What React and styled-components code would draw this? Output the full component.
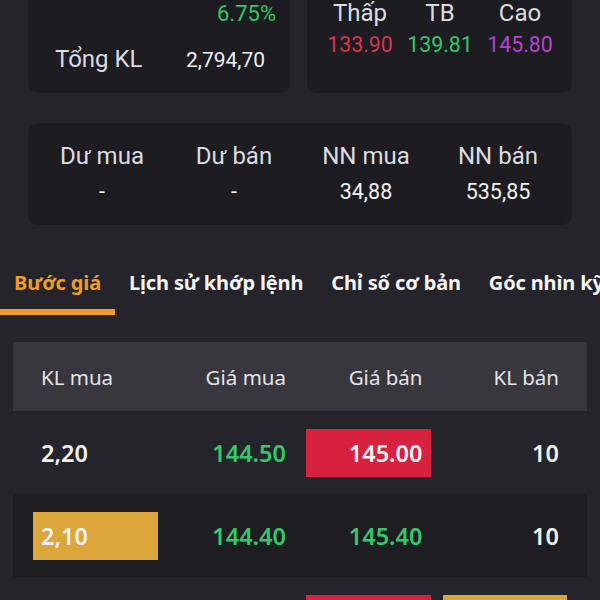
import React from 'react'
import styled, { createGlobalStyle } from 'styled-components'

const GlobalStyle = createGlobalStyle`
  html, body {
    margin: 0;
    padding: 0;
    background: #25242a;
  }
  body {
    width: 600px;
    height: 600px;
    overflow: hidden;
    font-family: Roboto, "Noto Sans", sans-serif;
    color: #e6e6e9;
  }
`

const Page = styled.div`
  width: 600px;
  display: flex;
  flex-direction: column;
`

const TopRow = styled.div`
  margin: -40px 28px 0;
  height: 133px;
  display: grid;
  grid-template-columns: 262px 1fr;
  gap: 17px;
`

const Card = styled.div`
  background: #1d1c21;
  border-radius: 10px;
  display: flex;
  flex-direction: column;
  justify-content: flex-end;
  padding: ${(p) => p.pad || '0'};
`

const Line = styled.div`
  display: flex;
  align-items: baseline;
  justify-content: ${(p) => p.justify || 'flex-start'};
  font-size: ${(p) => p.size || '21px'};
  line-height: ${(p) => p.lh || '28px'};
  color: ${(p) => p.color || '#dcdce0'};
  margin-bottom: ${(p) => p.mb || '0'};
`

const Label = styled.span`
  width: ${(p) => p.w || 'auto'};
  font-size: ${(p) => p.size || 'inherit'};
`

const Cols = styled.div`
  display: grid;
  grid-template-columns: repeat(${(p) => p.n}, 1fr);
  text-align: center;
  line-height: 28px;
  margin-bottom: ${(p) => p.mb || '0'};
`

const Cell = styled.span`
  color: ${(p) => p.color || '#dcdce0'};
  font-size: ${(p) => p.size || '24px'};
`

const StatsCard = styled(Card)`
  margin: 30px 28px 0;
  height: 102px;
  padding: 0 8px;
  justify-content: center;
  box-sizing: border-box;
`

const Tabs = styled.div`
  margin-top: 40px;
  display: flex;
  white-space: nowrap;
  font-family: "Noto Sans", sans-serif;
`

const Tab = styled.div`
  padding: 0 14px;
  height: 50px;
  box-sizing: border-box;
  font-size: 20px;
  font-weight: 700;
  letter-spacing: -0.15px;
  line-height: 36px;
  color: ${(p) => (p.active ? '#f29b25' : '#f4f4f6')};
  border-bottom: 6px solid ${(p) => (p.active ? '#f29b25' : 'transparent')};
`

const Table = styled.div`
  margin: 27px 13px 0;
  font-family: "Noto Sans", sans-serif;
`

const Row = styled.div`
  display: grid;
  grid-template-columns: repeat(4, 1fr);
  align-items: center;
  padding: 0 14px;
  height: ${(p) => (p.head ? '69px' : '83px')};
  background: ${(p) => (p.head ? '#38373d' : p.alt ? '#1e1d22' : 'transparent')};
`

const HeadCell = styled.div`
  margin: 0 6px;
  padding: 0 8px;
  font-size: 20.5px;
  color: #e4e4e7;
  text-align: ${(p) => (p.first ? 'left' : 'right')};
`

const Box = styled.div`
  margin: 0 6px;
  padding: 0 8px;
  height: 48px;
  display: flex;
  align-items: center;
  justify-content: ${(p) => (p.first ? 'flex-start' : 'flex-end')};
  font-size: 23.5px;
  font-weight: 600;
  color: ${(p) => p.color || '#f1f1f3'};
  background: ${(p) => p.bg || 'transparent'};
`

const GREEN = '#34c76b'
const RED = '#d8203f'
const YELLOW = '#dca63a'

const rows = [
  { kl1: '2,20', g1: '144.50', g2: '145.00', kl2: '10', g2bg: RED, g2c: '#f4f4f6' },
  { kl1: '2,10', g1: '144.40', g2: '145.40', kl2: '10', kl1bg: YELLOW, g2c: GREEN },
  { kl1: '1,50', g1: '144.30', g2: '145.50', kl2: '20', g2bg: RED, g2c: '#f4f4f6', kl2bg: YELLOW },
]

export default function App() {
  return (
    <>
      <GlobalStyle />
      <Page>
        <TopRow>
          <Card pad="0 14px 19px 27px">
            <Line color={GREEN} lh="24px" size="22px">
              <Label w="130px">144.50</Label>
              <span>+9.05</span>
            </Line>
            <Line justify="flex-end" color={GREEN} size="22px" mb="17px">
              6.75%
            </Line>
            <Line>
              <Label w="131px" size="24px">Tổng KL</Label>
              <span style={{ color: '#f0f0f2' }}>2,794,70</span>
            </Line>
          </Card>
          <Card pad="0 12px 34px 13px">
            <Cols n={3} mb="4px">
              <Cell>Thấp</Cell>
              <Cell>TB</Cell>
              <Cell>Cao</Cell>
            </Cols>
            <Cols n={3}>
              <Cell color="#d8354f" size="21.3px">133.90</Cell>
              <Cell color={GREEN} size="21.3px">139.81</Cell>
              <Cell color="#b443d2" size="21.3px">145.80</Cell>
            </Cols>
          </Card>
        </TopRow>

        <StatsCard>
          <Cols n={4} mb="8px">
            <Cell>Dư mua</Cell>
            <Cell>Dư bán</Cell>
            <Cell>NN mua</Cell>
            <Cell>NN bán</Cell>
          </Cols>
          <Cols n={4}>
            <Cell color="#f0f0f2" size="21.5px">-</Cell>
            <Cell color="#f0f0f2" size="21.5px">-</Cell>
            <Cell color="#f0f0f2" size="21.5px">34,88</Cell>
            <Cell color="#f0f0f2" size="21.5px">535,85</Cell>
          </Cols>
        </StatsCard>

        <Tabs>
          <Tab active>Bước giá</Tab>
          <Tab>Lịch sử khớp lệnh</Tab>
          <Tab>Chỉ số cơ bản</Tab>
          <Tab>Góc nhìn kỹ thuật</Tab>
        </Tabs>

        <Table>
          <Row head>
            <HeadCell first>KL mua</HeadCell>
            <HeadCell>Giá mua</HeadCell>
            <HeadCell>Giá bán</HeadCell>
            <HeadCell>KL bán</HeadCell>
          </Row>
          {rows.map((r, i) => (
            <Row key={i} alt={i % 2 === 1}>
              <Box first bg={r.kl1bg}>{r.kl1}</Box>
              <Box color={GREEN}>{r.g1}</Box>
              <Box color={r.g2c} bg={r.g2bg}>{r.g2}</Box>
              <Box bg={r.kl2bg}>{r.kl2}</Box>
            </Row>
          ))}
        </Table>
      </Page>
    </>
  )
}
